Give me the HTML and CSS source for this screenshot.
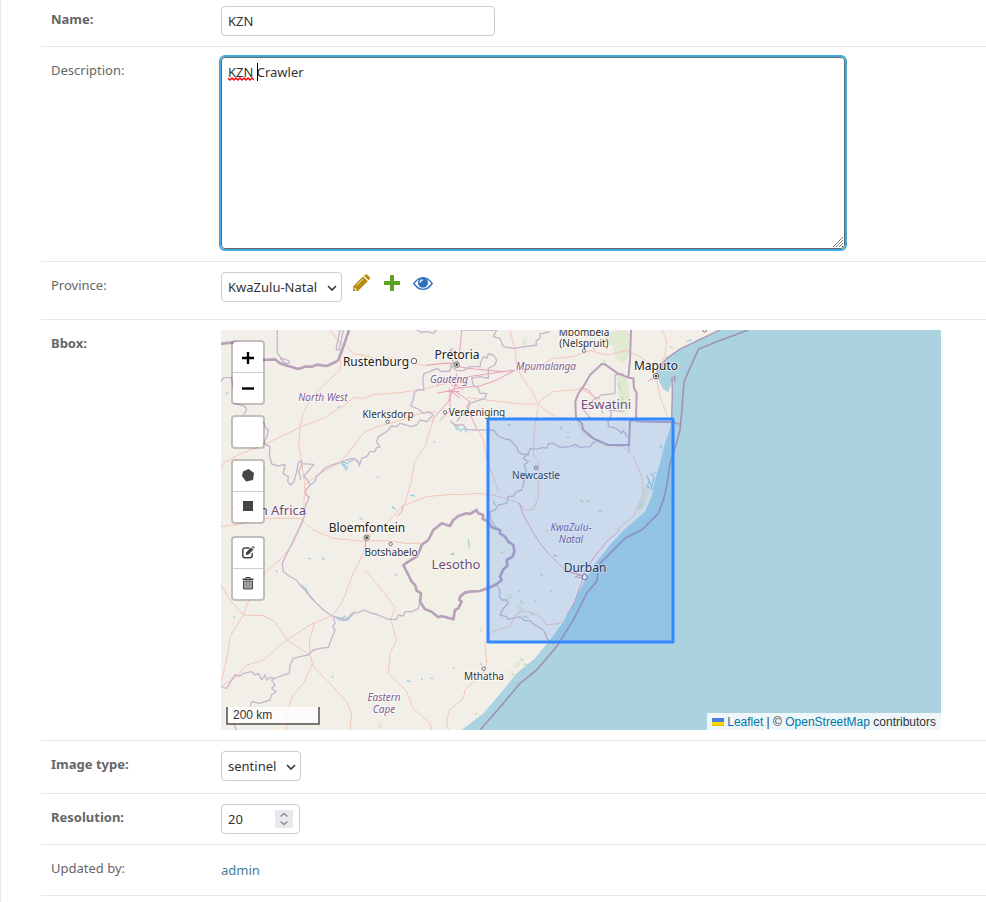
FILE: index.html
```html
<!DOCTYPE html>
<html lang="en">
<head>
<meta charset="utf-8">
<title>Change crawler</title>
<link rel="stylesheet" href="styles.css">
</head>
<body>
<main class="content">
<form class="form">
  <div class="row row-first">
    <label class="label required" for="name">Name:</label>
    <input class="control name" id="name" type="text" value="KZN">
  </div>

  <div class="row row-description">
    <label class="label" for="description">Description:</label>
    <div class="textarea-wrap">
      <textarea class="control description" id="description" spellcheck="false">KZN Crawler</textarea>
      <svg class="squiggle" viewBox="0 0 26 4" aria-hidden="true"><path d="M0 1 2 3 4 1 6 3 8 1 10 3 12 1 14 3 16 1 18 3 20 1 22 3 24 1 26 3"/></svg>
      <span class="caret"></span>
      <svg class="grip" viewBox="0 0 12 12" aria-hidden="true"><path d="M1 11 11 1M4 11 11 4M7 11 11 7M10 11 11 10"/></svg>
    </div>
  </div>

  <div class="row row-province">
    <label class="label" for="province">Province:</label>
    <div class="related">
      <div class="select-wrap">
        <select class="control province" id="province"><option>KwaZulu-Natal</option></select>
        <svg class="chevron" viewBox="0 0 10 6" aria-hidden="true"><path d="M1 1l4 4 4-4"/></svg>
      </div>
      <div class="related-links">
        <a class="related-link" href="#" aria-label="Change province">
          <svg width="18" height="18" viewBox="0 0 18 18"><path fill="#b78b0b" d="M0 17V12.500L10 2.500l4.800 4.800L5 17zM11 1.700l1-1q1-1 2.200 0l2.300 2.300q1 1.100 0 2.200l-1 1z"/><path fill="none" stroke="#fff" stroke-width=".8" d="M3.500 11.500 10 5M1.200 13.500v1.300h1.500v1.400h1.500"/></svg>
        </a>
        <a class="related-link" href="#" aria-label="Add province">
          <svg width="18" height="18" viewBox="0 0 18 18"><path fill="#5fa225" d="M7.500 1h3q.5 0 .5.500V7h5.500q.5 0 .5.500v3q0 .5-.5.500H11v5.500q0 .5-.5.500h-3q-.5 0-.5-.5V11H1.500q-.5 0-.5-.5v-3Q1 7 1.500 7H7V1.500Q7 1 7.500 1z"/></svg>
        </a>
        <a class="related-link" href="#" aria-label="View province">
          <svg width="20" height="18" viewBox="0 0 20 18"><path fill="#fff" stroke="#2b70bf" stroke-width="1.300" d="M.8 9.500Q5 3.600 10 3.600t9.200 5.900Q15 15.400 10 15.400T.8 9.500z"/><circle cx="10" cy="8.700" r="5" fill="#2b70bf"/><path fill="none" stroke="#fff" stroke-width="1.200" d="M7.200 8.700Q7.200 6 9.900 5.900"/></svg>
        </a>
      </div>
    </div>
  </div>

  <div class="row">
    <span class="label required">Bbox:</span>
    <div class="map">
      <svg class="map-art" viewBox="0 0 720 400" role="img" aria-label="Map of KwaZulu-Natal">
        <rect class="land" width="720" height="400"/>
        <g transform="translate(-1 0) scale(.33333)">
          <g class="forest">
            <path d="M1150 30q20-30 60-30l20 10-5 70-15 20-25-15-5-35zM1190 140l20-10 15 30 5 60-12 40-18-30z"/>
            <path d="M860 800l10-12 8 14-10 8zM890 830l16-8 6 22-14 6zM910 25l12 4-6 18-12-2zM475 1180l12-6v20l-14 2zM885 1000l18-8-6 20-14 2zM862 1020l10 4-8 10z" />
            <path d="M1270 480l8-20 10 30-15 40-20 20zM940 500l9 2-6 9z"/>
          </g>
          <path class="lesotho-fill" d="M550 705l95-105 45-12 80-45 35 40 65 70-30 60-15 60-70 30-60 10-40 65-65-28-35-50z"/>
          <path class="water" d="M725 1200 790 1150 850 1080 890 1030 945 985 990 930 1030 875 1060 820 1090 760 1130 695 1170 645 1215 597 1275 545 1295 500 1305 450 1320 400 1335 340 1352 290 1355 265 1357 190 1358 150 1345 187 1330 178 1315 150 1310 120 1340 85 1380 58 1440 28 1500 0H2163V1200z"/>
          <path class="coast" d="M1310 125 1312 118 1340 85 1380 57 1440 28 1500 0M1355 270 1357 190 1356 145 1365 140 1364 155"/>
          <g class="lakes">
            <path d="M362 395l20 5 22-14 12 12M365 400l14 20 3-10zM242 765l15 10 10 20 15 15M345 860l18 8 12-10 8 12 14-16 6-10M350 866l20 6 14-4"/>
            <path d="M697 280l15 8 8 14 12-6 10 12M705 285l6 16M1280 435l8 18-6 16 12 8M1290 430l12 10-6 30M1285 445l14 34M1320 345l5 10M1225 345l4 22"/>
            <path d="M265 686h8M305 682l8 8M418 565l10 2M570 495l15 3M515 530l12 8M640 333l6 4M470 440l6 2M525 732l8 4M695 672l8 2M560 1052l12 3M603 1046l6 3M632 1044l8 2M335 1038l6 4M352 232l8-3M820 512l6 14M1000 675l12 4M863 282l10 4M1020 290l6 10M745 628l3 25M690 675l12-6M780 1000l6 6M168 721l4 6M40 860l5 4M18 192l6-4M1145 240l4 10M1040 322h8M1400 35l15-7"/>
          </g>
          <g class="vegetation">
            <path d="M1010 430l6 3M1063 355l4-5M1080 508l10 8M1100 512l10 4M1135 545l12-4M960 730l9 8M900 812l10 8M930 846l14 10M895 780l4 6M990 786l8-4M908 858l18 6M945 810l3 8M780 900l6 2M1150 90l5 5M1120 50l4 12M1350 50l8 4M1195 160l6 20M1206 200l4 20M1300 432l6-5M1292 510l4-10M1265 520l-10 18M895 425l8 4M980 600l5 4M840 665l8 5M875 1035l8-4M900 985l12 8M910 1002l14 3M765 1153l6-3M698 1014l7 2"/>
          </g>
          <g class="roads">
            <path d="M0 425 10 400 60 372 130 345 240 292 310 265 370 228 400 203 430 205 460 194 540 188 610 178 690 157"/>
            <path d="M240 292 250 250 270 210 305 170 360 122 362 95 355 75M375 40 400 72 430 75 480 90 520 84 560 95 610 106 690 98"/>
            <path d="M240 292 236 350 245 395 254 465 250 570 220 640 180 690 120 740 90 800 70 855 30 920 20 990 0 1070M254 465 300 430 360 398 400 350 430 310 470 290 530 275 600 250 650 245"/>
            <path d="M640 270 615 350 583 395 575 450 555 520 500 580 440 620 430 670 395 740 370 810 340 855 270 885 200 930 130 990 80 1005 50 1040 0 1070"/>
            <path d="M555 525 620 500 690 493 720 494 770 490 820 495 870 510 900 520 915 542 940 538 950 515 955 500 955 395 940 375 943 300 955 225"/>
            <path d="M775 300 790 330 800 390 820 440 835 485M740 202 800 210 860 217 900 222 955 222 965 208 1000 185 1080 178 1110 190 1150 225M955 225 1010 263 1070 270 1090 310 1150 345 1210 350 1240 380 1265 440 1270 490 1240 560 1190 600"/>
            <path d="M955 222 935 180 910 150 890 110 885 60 870 0M860 125 940 118 1000 85 1060 80 1110 62 1160 75 1220 62 1260 80 1305 110M1310 145 1320 200 1345 265M1325 0 1340 30 1335 80 1312 112M0 760 30 810 70 855 130 857 165 875 200 930 270 975 280 1010 330 1060 380 1115 395 1150 390 1200M278 1000 250 1060 220 1095 200 1150 200 1200"/>
            <path d="M435 720 470 760 525 832 512 870 530 930 510 970 505 1030 560 1085 580 1135 630 1180 635 1200M270 970 268 930 285 875M690 1140 730 1105 735 1080 790 1030 800 1000 795 940 815 905 870 890 885 855 915 842 955 855 980 885 1020 880 1030 870M690 1137 680 1170 685 1200M0 590 60 582 130 565 240 565 280 600 340 625 420 633 500 632 560 640 610 640M330 0 370 50"/>
          </g>
          <g class="majors">
            <path d="M705 170 720 145 760 138 850 125 880 120M710 110 770 118 855 125M705 175 780 168 830 150 885 121M700 180 750 215 740 230 770 295M700 175 685 215 645 260 635 275M690 180 690 240 660 272M710 130 702 180M710 105 720 60 725 0M700 180 650 190M700 170 680 145 650 165M710 100 670 100 620 106M680 185H720M685 175 720 205M695 155 730 180"/>
            <path d="M898 520 910 555 935 600 960 640 985 670 1020 705 1040 725 1085 735 1065 740 1090 745 1080 770 1060 825 1040 855M1090 730 1120 685 1160 635 1200 600M1040 720 1090 740M550 525 545 545 530 560M437 630 436 680M1080 172 1105 180 1122 202 1140 205M1315 145 1290 148 1285 155"/>
          </g>
          <g class="province">
            <path d="M172 0V70L185 85 207 92V100H195L180 85M348 60 360 0M357 62 370 0M348 60H357M0 160 10 143H35L40 180M40 218 75 230 80 240 70 255M120 270 132 278 135 290 145 300 140 322 132 340 150 350 148 375 155 402 175 408 195 403 190 432 205 440 203 455 212 465 222 455 230 425 235 397 245 392 244 410 235 425 242 440 240 450M245 401 282 403 252 438 262 450 270 465 258 480 258 495 268 502 260 520 253 540 258 550 235 600 187 700 190 725 210 740 230 750 240 765 255 780 270 800 285 815 310 840 340 860"/>
            <path d="M270 465 285 455 288 440 300 430 315 415 335 405 360 398 380 390 400 385 415 395 418 408 425 385 440 380 450 365 465 365 470 352 480 352 470 335 475 320 500 305 515 288 530 290 540 280 575 290 590 285 600 270 620 275 640 255 625 245 610 250 595 237 572 228 580 210 582 190 592 180 612 180 608 150 612 130 630 125 650 115 665 125 690 123 695 108 710 122 730 122 750 110 780 110 783 95 790 80 800 85 805 72 820 75 830 90 825 105 805 115V145L780 140 755 145 760 165 775 175 780 190 800 190 795 205 750 220 740 250 725 255 710 275"/>
            <path d="M690 272 705 285 730 285 740 298 770 300 800 300 820 300 835 318 850 325 870 330 890 350 895 365 905 372 925 375 930 355 950 358 970 352 980 355 985 342 1000 340 1020 352 1050 350 1065 343 1080 352 1110 350 1120 338 1130 335M925 370 910 385 925 395 912 405 920 425 910 430 912 460 905 480 890 485 880 498 865 500 860 520 835 525 825 540 810 545 812 570 830 595M830 765 840 780 838 800 845 810 860 810 865 820 850 835 840 855 860 860 865 868 880 865 900 860 915 872 930 872 945 885 970 900 978 915 980 925 1010 955"/>
            <path d="M340 860 345 880 338 890 345 900 335 925 325 952 300 955 280 960 265 975 240 980 220 985 210 1005 208 1030 190 1035 165 1045 150 1042 140 1050 135 1035 125 1050 115 1030 105 1035 95 1025 70 1030 60 1038 45 1035 35 1050 20 1075 0 1070M165 1045 155 1050 165 1065 155 1075 168 1085 155 1095 150 1110 120 1120 95 1115 90 1130M60 1165 45 1160 40 1180 50 1200M340 860 365 865 380 870 395 850 415 848 430 840 450 848 475 855 505 868 530 868 535 855 550 858 555 845 575 845 595 835 602 810M590 0 605 7 620 5 640 10 650 0M725 0H830L820 20 840 25 850 50 880 55 950 45 948 32 960 25 960 12 990 5M1070 270 1110 262 1090 240 1120 210 1145 195 1185 190 1185 135 1210 132M1165 270 1165 290 1180 292 1195 300 1205 310 1210 302 1222 320M700 55 690 60 700 70 690 80 700 95 690 110M1160 275 1175 255 1170 240 1210 245"/>
          </g>
          <path class="nation nation-wide" d="M0 42 30 38 90 42 110 90 130 90 165 88 180 100 195 105 235 117 255 110 275 110 290 104 320 108 345 97 355 90 370 50 387 0M550 705 565 695 590 680 600 660 605 645 625 630 640 600 665 580 690 588 700 570 715 558 740 550 750 552 770 540 775 550 790 555 788 567 805 575 815 592 840 600 840 610 855 620 865 635 880 645 883 665 878 680 860 690 862 708 850 718 840 740 845 750 830 762 810 772 780 783 750 785 735 788 720 800 718 810 725 815 715 835 705 840 700 868 665 858 655 862 635 845 615 838 600 815 603 790 590 782 585 765 575 755z"/>
          <path class="nation" d="M1068 262 1066 215 1075 190 1090 170 1110 135 1145 102 1155 103 1190 128 1225 143 1240 145 1242 175 1250 190 1248 270 1230 272 1227 345H1165L1120 325 1090 300 1085 280zM1233 0 1230 90 1225 143M1248 274 1355 277 1383 283"/>
          <path class="maritime" d="M780 1200 850 1120 900 1060 950 1020 1010 950 1060 870 1100 790 1130 755 1135 720 1140 700 1215 625 1265 600 1315 550 1330 510 1340 470 1350 400 1365 355 1380 300 1385 250 1392 155 1435 58 1490 35 1585 0"/>
          <g class="place">
            <circle cx="710" cy="104" r="8"/><circle class="dot" cx="710" cy="104" r="4"/>
            <circle cx="1308" cy="138" r="8"/><circle class="dot" cx="1308" cy="138" r="4"/>
            <circle cx="440" cy="623" r="8"/><circle class="dot" cx="440" cy="623" r="4"/>
            <circle cx="582" cy="93" r="8"/><circle cx="503" cy="275" r="5"/><circle cx="675" cy="247" r="5"/>
            <circle cx="948" cy="413" r="5"/><circle cx="1092" cy="62" r="5"/><circle cx="512" cy="642" r="5"/>
            <circle cx="791" cy="1016" r="5"/><circle cx="1094" cy="741" r="8"/><circle cx="1454" cy="1" r="5"/>
          </g>
        </g>
        <g class="city">
          <text x="155" y="36">Rustenburg</text><text x="236" y="29">Pretoria</text>
          <text x="435" y="40">Maputo</text><text x="146" y="202">Bloemfontein</text><text x="364" y="242">Durban</text>
        </g>
        <g class="town">
          <text x="363" y="6">Mbombela</text><text x="363" y="17">(Nelspruit)</text>
          <text x="167" y="88">Klerksdorp</text><text x="256" y="86">Vereeniging</text>
          <text x="315" y="149">Newcastle</text><text x="170" y="226">Botshabelo</text><text x="263" y="350">Mthatha</text>
        </g>
        <g class="region">
          <text x="102" y="71">North West</text><text x="228" y="53">Gauteng</text><text x="325" y="40">Mpumalanga</text>
          <text x="350" y="201">KwaZulu-</text><text x="350" y="213">Natal</text>
          <text x="163" y="371">Eastern</text><text x="163" y="383">Cape</text>
        </g>
        <g class="country">
          <text x="235" y="239">Lesotho</text><text x="385" y="79">Eswatini</text><text x="48" y="185">South Africa</text>
        </g>
        <rect class="bbox" x="267" y="89" width="185" height="223"/>
      </svg>

      <div class="toolbars">
        <div class="toolbar">
          <button class="tool" type="button" aria-label="Zoom in"><svg width="14" height="14" viewBox="0 0 14 14"><path fill="none" stroke="#000" stroke-width="2.400" d="M1 8h12M7 2v12"/></svg></button>
          <button class="tool" type="button" aria-label="Zoom out"><svg width="14" height="14" viewBox="0 0 14 14"><path fill="none" stroke="#000" stroke-width="2.400" d="M1 7.500h12"/></svg></button>
        </div>
        <div class="toolbar">
          <button class="tool" type="button" aria-label="Reset view"></button>
        </div>
        <div class="toolbar toolbar-draw">
          <button class="tool" type="button" aria-label="Draw a polygon"><svg width="14" height="14" viewBox="0 0 14 14"><path fill="#464646" d="M7.500 0 13 4 12 11 5 12.500 1 7 2 2.500z"/></svg></button>
          <button class="tool" type="button" aria-label="Draw a rectangle"><svg width="14" height="14" viewBox="0 0 14 14"><path fill="#464646" d="M2 1h10v10H2z"/></svg></button>
        </div>
        <div class="toolbar">
          <button class="tool" type="button" aria-label="Edit layers"><svg width="14" height="14" viewBox="0 0 14 14"><path fill="none" stroke="#464646" stroke-width="1.500" d="M8.500 2H4Q1.800 2 1.800 4.200V9.500Q1.800 11.700 4 11.700H9Q11.200 11.700 11.200 9.500V7"/><path fill="#464646" d="M5 9V6.500L10 1.500l2.300 2.300-5 5zM11 1l1-1 1.700 1.700-1 1z"/></svg></button>
          <button class="tool" type="button" aria-label="Delete layers"><svg width="14" height="14" viewBox="0 0 14 14"><path fill="#464646" d="M1.500 1.500h11V3h-11zM4.500 0h5v1.500h-1V1h-3v.5h-1z"/><path fill="#a5a5a5" stroke="#464646" d="M2.500 4h9v8h-9z"/><path stroke="#8a8a8a" d="M5.500 5v6M8.500 5v6"/></svg></button>
        </div>
      </div>
      <div class="scale">200 km</div>
      <div class="attribution"><a href="#"><svg class="flag" width="12" height="8" viewBox="0 0 12 8" aria-hidden="true"><path fill="#4c7be1" d="M0 0h12v4H0z"/><path fill="#ffd500" d="M0 4h12v3H0z"/><path fill="#e0bc00" d="M0 7h12v1H0z"/></svg> Leaflet</a> | © <a href="#">OpenStreetMap</a> contributors</div>
    </div>
  </div>

  <div class="row row-type">
    <label class="label required" for="image-type">Image type:</label>
    <div class="select-wrap">
      <select class="control image-type" id="image-type"><option>sentinel</option></select>
      <svg class="chevron" viewBox="0 0 10 6" aria-hidden="true"><path d="M1 1l4 4 4-4"/></svg>
    </div>
  </div>

  <div class="row">
    <label class="label required" for="resolution">Resolution:</label>
    <div class="number-wrap">
      <input class="control resolution" id="resolution" type="number" value="20">
      <svg class="stepper" viewBox="0 0 18 18" aria-hidden="true"><path d="M5.500 6.500 9 3.500l3.500 3M5.500 11.500l3.500 3 3.500-3"/></svg>
    </div>
  </div>

  <div class="row">
    <span class="label">Updated by:</span>
    <div class="readonly"><a href="#">admin</a></div>
  </div>
</form>
</main>
</body>
</html>
```

FILE: styles.css
```css
* { box-sizing: border-box; }

body {
  margin: 0;
  background: #fff;
  color: #333;
  font: 13px/18px "Noto Sans", "Open Sans", sans-serif;
}

.content {
  min-height: 100vh;
  padding-left: 40px;
  border-left: 1px solid #e8e8e8;
}

.row {
  display: flex;
  align-items: flex-start;
  padding: 10px;
  padding-right: 0;
  border-bottom: 1px solid #e8e8e8;
}

.row-first { padding-top: 6px; }
.row-description { padding-bottom: 12px; }
.row-province { padding-bottom: 17px; }
.row-type { padding-bottom: 12px; }

.label {
  flex: 0 0 170px;
  padding-top: 4px;
  color: #666;
}

.required { font-weight: 700; }

.control {
  display: block;
  height: 30px;
  margin: 0;
  padding: 5px 6px;
  border: 1px solid #ccc;
  border-radius: 4px;
  background: #fff;
  color: #333;
  font: inherit;
  appearance: none;
}

.name { width: 274px; }
.province { width: 121px; }
.image-type { width: 80px; }
.resolution { width: 79px; appearance: textfield; }

.resolution::-webkit-inner-spin-button { display: none; }

.textarea-wrap,
.select-wrap,
.number-wrap { position: relative; }

.textarea-wrap {
  flex: 0 1 624px;
}

.description {
  width: 100%;
  height: 192px;
  border-color: #666;
  outline: 2px solid #41a8e0;
  resize: none;
}

.squiggle {
  position: absolute;
  top: 20px;
  left: 7px;
  width: 26px;
  height: 4px;
  fill: none;
  stroke: #f00;
  stroke-width: 1.4;
}

.caret {
  position: absolute;
  top: 6px;
  left: 36px;
  width: 1px;
  height: 18px;
  background: #000;
}

.grip {
  position: absolute;
  right: 1px;
  bottom: 1px;
  width: 12px;
  height: 12px;
  stroke: #777;
}

.chevron {
  position: absolute;
  top: 13px;
  right: 5px;
  width: 10px;
  height: 6px;
  fill: none;
  stroke: #333;
  stroke-width: 1.6;
  pointer-events: none;
}

.stepper {
  position: absolute;
  top: 6px;
  right: 7px;
  width: 18px;
  height: 18px;
  background: #e9e9ed;
  fill: none;
  stroke: #8f8f9d;
  stroke-width: 1.6;
}

.related {
  display: flex;
  gap: 11px;
}

.related-links {
  display: flex;
  gap: 12px;
  padding-top: 2px;
}

.related-link,
.related-link svg { display: block; }

.readonly { padding: 6px 0; }

a {
  color: #447e9b;
  text-decoration: none;
}

.map {
  position: relative;
  flex: 0 1 720px;
  overflow: hidden;
  font: 12px/17px "Liberation Sans", Arial, sans-serif;
}

.map-art {
  display: block;
  width: 100%;
}

.land { fill: #f2efe9; }
.water { fill: #aad3df; }
.forest { fill: #d8e6c6; opacity: .6; }
.lesotho-fill { fill: #f2f0e4; }

.coast,
.lakes,
.vegetation,
.roads,
.majors,
.province,
.nation,
.maritime {
  fill: none;
  stroke-linejoin: round;
}

.coast { stroke: #a994b5; stroke-width: 4; }
.lakes { stroke: #a3d0e0; stroke-width: 4; }
.vegetation { stroke: #c6dfba; stroke-width: 5; }
.roads { stroke: #f6c6b8; stroke-width: 3; }
.majors { stroke: #e8a0b8; stroke-width: 3; }
.province { stroke: #c8b7cb; stroke-width: 4; }
.nation { stroke: #b8a1b9; stroke-width: 6; }
.nation-wide { stroke-width: 8; }
.maritime { stroke: #a094b4; stroke-width: 5; }

.place { fill: #fff; stroke: #666; stroke-width: 3; }
.place .dot { fill: #333; stroke: none; }

.map-art text {
  font-family: "Noto Sans", "Open Sans", sans-serif;
  text-anchor: middle;
  paint-order: stroke;
  stroke: rgba(255, 255, 255, .6);
  stroke-width: 2px;
  stroke-linejoin: round;
}

.city { fill: #222; font-size: 12px; }
.town { fill: #333; font-size: 10px; }
.region { fill: #82608f; font-size: 10px; font-style: italic; }
.country { fill: #704a78; font-size: 13px; }

.bbox {
  fill: #38f;
  fill-opacity: .2;
  stroke: #38f;
  stroke-width: 3;
  stroke-linejoin: round;
}

.toolbars {
  position: absolute;
  top: 10px;
  left: 10px;
  display: flex;
  flex-direction: column;
  gap: 10px;
}

.toolbar {
  border: 2px solid rgba(0, 0, 0, .2);
  border-radius: 4px;
  background: #fff;
  background-clip: padding-box;
}

.toolbar-draw { margin-bottom: 2px; }

.tool {
  display: flex;
  align-items: center;
  justify-content: center;
  width: 30px;
  height: 30px;
  padding: 0;
  border: 0;
  background: none;
}

.tool + .tool {
  height: 31px;
  border-top: 1px solid #ccc;
}

.scale {
  position: absolute;
  bottom: 5px;
  left: 5px;
  width: 94px;
  padding: 0 5px;
  border: 2px solid #777;
  border-top: 0;
  background: rgba(255, 255, 255, .8);
  line-height: 16px;
}

.attribution {
  position: absolute;
  right: 0;
  bottom: 0;
  padding: 1px 5px 0;
  background: rgba(255, 255, 255, .8);
  line-height: 16px;
}

.attribution a { color: #0078a8; }
```
